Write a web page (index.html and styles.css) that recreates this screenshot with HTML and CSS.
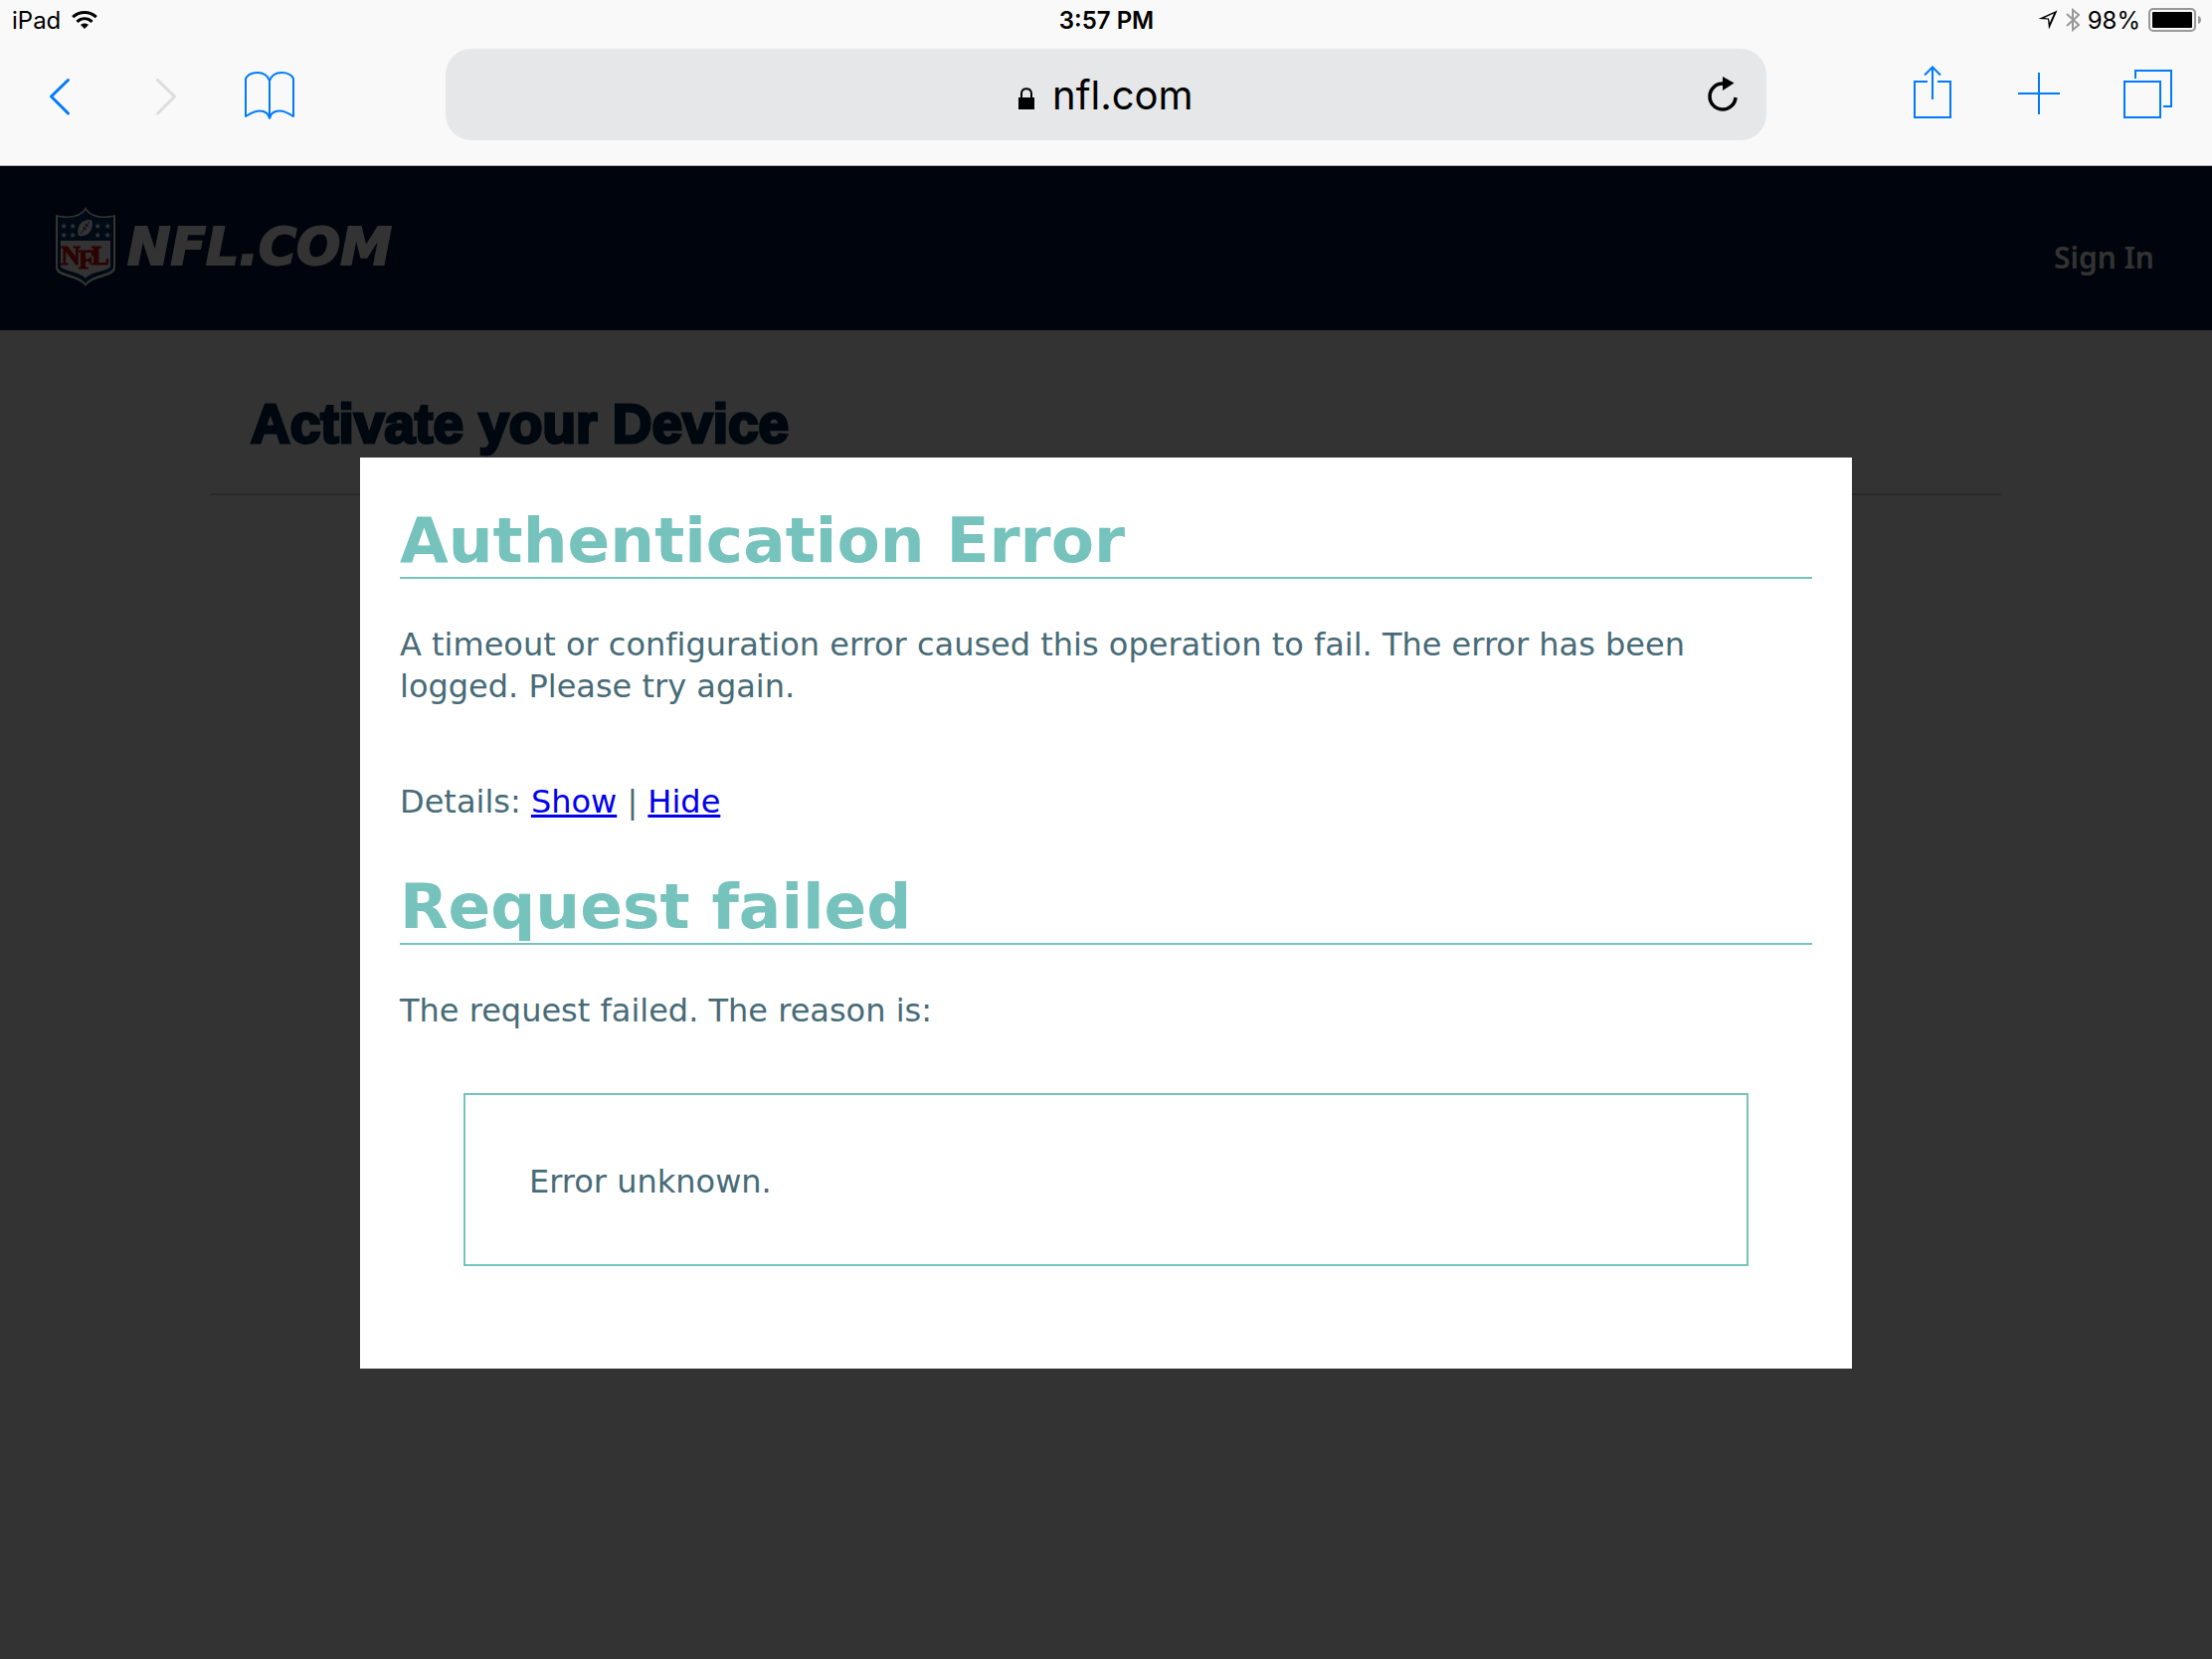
FILE: index.html
```
<!DOCTYPE html>
<html lang="en">
<head>
    <meta charset="UTF-8" />
    <meta name="viewport" content="width=device-width, initial-scale=1.0" />
    <link rel="stylesheet" href="styles.css">
    <title>NFL.com - Activate your Device</title>
</head>
<body>
    <div class="browser">
        <div class="status-bar">
            <div class="status-left">
                <span>iPad</span>
                <svg width="26" height="18" viewBox="0 0 26 18" fill="none" stroke="#000" stroke-width="3">
                    <path d="M1.2 6.2C8 0 18 0 24.8 6.2" />
                    <path d="M5.4 10.8C10 6.8 16 6.8 20.6 10.8" />
                    <path d="M9 14C11.4 12 14.6 12 17 14L13 18Z" fill="#000" stroke="none" />
                </svg>
            </div>
            <div class="time">3:57 PM</div>
            <div class="status-right">
                <svg width="20" height="20" viewBox="0 0 20 20">
                    <path fill="#000" fill-rule="evenodd" d="M19.500 0.500L11 19.500L10 9.500L0.500 9ZM16 3.500L6.500 8L11 8.500L11.800 13Z" />
                </svg>
                <svg width="14" height="24" viewBox="0 0 14 24" fill="none" stroke="#999" stroke-width="2">
                    <path d="M1 6L13 17L7 22V2L13 7L1 18" />
                </svg>
                <span>98%</span>
                <svg width="53" height="24" viewBox="0 0 53 24">
                    <rect x="1" y="1" width="46" height="22" rx="4" fill="none" stroke="#999" stroke-width="2" />
                    <rect x="4" y="4" width="40" height="16" rx="1" fill="#000" />
                    <path d="M50 8C54 9 54 15 50 16Z" fill="#999" />
                </svg>
            </div>
        </div>

        <div class="toolbar">
            <div class="tools">
                <button aria-label="Back">
                    <svg viewBox="0 0 60 60" stroke-width="3" stroke-linecap="round" stroke-linejoin="round"><path d="M38.500 15.500L21.500 32L38.500 49" /></svg>
                </button>
                <button class="off" aria-label="Forward" disabled>
                    <svg viewBox="0 0 60 60" stroke-width="3" stroke-linecap="round" stroke-linejoin="round"><path d="M21.500 15.500L38.500 32L21.500 49" /></svg>
                </button>
                <button aria-label="Bookmarks">
                    <svg viewBox="0 0 60 60" stroke-width="2" stroke-linejoin="round"><path d="M3 52V14C5 10 10 8 15 8C20.500 8 25 11 27 16C29 11 33.500 8 39 8C44 8 49 10 51 14V52C46.500 49 42 46.500 37 46.500C32 46.500 28 49 27 54C26 49 22 46.500 17 46.500C12 46.500 7.500 49 3 52ZM27 16V54" /></svg>
                </button>
            </div>
            <div class="address">
                <label class="address-text">
                    <svg width="16" height="30" viewBox="0 0 16 30">
                        <rect y="18" width="16" height="12" fill="#000" />
                        <path d="M3 19V14C3 7.500 13 7.500 13 14V19" fill="none" stroke="#000" stroke-width="2" />
                    </svg>
                    <input type="text" value="nfl.com" aria-label="Address">
                </label>
                <button class="reload" aria-label="Reload">
                    <svg width="40" height="40" viewBox="0 0 40 40">
                        <path d="M20 9A13 13 0 1 0 33 23" fill="none" stroke="#000" stroke-width="3.500" />
                        <path d="M20 2L31.500 8.500L20 16Z" fill="#000" />
                    </svg>
                </button>
            </div>
            <div class="tools right">
                <button aria-label="Share">
                    <svg viewBox="0 0 60 60" stroke-width="2"><path d="M25 17H12V53H48V17H35M30 35V3M22 10.500L30 2.500L38 10.500" /></svg>
                </button>
                <button aria-label="New tab">
                    <svg viewBox="0 0 60 60" stroke-width="2"><path d="M9 29H51M30 8V50" /></svg>
                </button>
                <button aria-label="Tabs">
                    <svg viewBox="0 0 60 60" stroke-width="2"><path d="M9 17H45V53H9ZM20 14V6H56V42H48" /></svg>
                </button>
            </div>
        </div>
    </div>

    <div class="page">
        <header>
            <a class="logo" href="#">
                <svg width="60" height="80" viewBox="0 0 60 80">
                    <path d="M30 0C33 7 43 12 60 8V62C59 71 36 70 30 80C24 70 1 71 0 62V8C17 12 27 7 30 0Z" fill="#fff" />
                    <path d="M30 3C34 9 44 13 58 10V61C57 68 36 68 30 77C24 68 3 68 2 61V10C16 13 26 9 30 3Z" fill="#013369" />
                    <path d="M5 34H55V60C52 65 35 65 30 72C25 65 8 65 5 60Z" fill="#fff" />
                    <g class="stars">
                        <text x="8" y="22">★</text>
                        <text x="17" y="22">★</text>
                        <text x="42" y="22">★</text>
                        <text x="52" y="22">★</text>
                        <text x="8" y="31">★</text>
                        <text x="17" y="31">★</text>
                        <text x="42" y="31">★</text>
                        <text x="52" y="31">★</text>
                    </g>
                    <path d="M23 29C20 20 26 12 36 13C39 21 34 31 23 29Z" fill="#fff" />
                    <path d="M25 27L34 15M27 20L31 23M29 17L33 20" stroke="#013369" stroke-width="1" />
                    <g class="shield-text">
                        <text x="15" y="58">N</text>
                        <text x="31" y="62">F</text>
                        <text x="45" y="58">L</text>
                    </g>
                </svg>
                <span class="wordmark">NFL.COM</span>
            </a>
            <a class="sign-in" href="#">Sign In</a>
        </header>

        <main>
            <h1>Activate your Device</h1>
        </main>

        <div class="overlay">
            <div class="modal" role="dialog" aria-labelledby="error-title">
                <h2 id="error-title">Authentication Error</h2>
                <p>A timeout or configuration error caused this operation to fail. The error has been logged. Please try again.</p>
                <p class="details">Details: <a href="#reason">Show</a> | <a href="#">Hide</a></p>
                <div id="reason">
                    <h2>Request failed</h2>
                    <p>The request failed. The reason is:</p>
                    <div class="reason-box">Error unknown.</div>
                </div>
            </div>
        </div>
    </div>
</body>
</html>
```

FILE: styles.css
```
* {
    box-sizing: border-box;
}

body {
    margin: 0;
    min-height: 100vh;
    display: flex;
    flex-direction: column;
    font-family: Inter, "Liberation Sans", sans-serif;
    background-color: white;
    color: black;
}

button {
    padding: 0;
    border: none;
    background: none;
    cursor: pointer;
}

svg {
    display: block;
}

/* browser bars */
.browser {
    background-color: #f9f9f9;
    border-bottom: 1px solid #b2b2b2;
}

.status-bar {
    display: grid;
    grid-template-columns: 1fr auto 1fr;
    align-items: center;
    height: 40px;
    padding: 0 11px 0 12px;
    font-size: 24px;
}

.status-left, .status-right {
    display: flex;
    align-items: center;
    gap: 11px;
}

.status-right {
    justify-content: flex-end;
    gap: 8px;
}

.time {
    font-weight: 600;
}

.toolbar {
    display: grid;
    grid-template-columns: 448px 1fr 448px;
    align-items: center;
    padding: 9px 0 25px;
}

.tools {
    display: flex;
    gap: 47px;
    padding: 0 30px;
}

.tools.right {
    justify-content: flex-end;
    padding: 0 37px;
}

.tools svg {
    width: 60px;
    height: 60px;
    fill: none;
    stroke: #007aff;
}

.tools .off svg {
    stroke: #dcdcdc;
}

.address {
    display: grid;
    grid-template-columns: 1fr auto 1fr;
    align-items: center;
    height: 92px;
    padding: 0 24px;
    background-color: #e6e7e9;
    border-radius: 26px;
}

.address-text {
    grid-column: 2;
    display: flex;
    align-items: center;
    gap: 18px;
}

.address input {
    width: 142px;
    padding: 0;
    border: none;
    outline: none;
    background: none;
    font-family: inherit;
    font-size: 40px;
    color: black;
}

.reload {
    justify-self: end;
}

/* site */
.page {
    position: relative;
    flex: 1;
}

header {
    display: flex;
    justify-content: space-between;
    align-items: center;
    height: 165px;
    padding: 0 58px 4px 56px;
    background-color: #00143c;
}

.logo {
    display: flex;
    align-items: center;
    gap: 12px;
    color: white;
    text-decoration: none;
}

.stars {
    font-family: "DejaVu Sans", sans-serif;
    font-size: 8px;
    fill: white;
    text-anchor: middle;
}

.shield-text {
    font-family: "Liberation Serif", serif;
    font-size: 27px;
    font-weight: bold;
    fill: #d50a0a;
    stroke: #d50a0a;
    stroke-width: 1px;
    text-anchor: middle;
}

.wordmark {
    font-family: "DejaVu Sans", sans-serif;
    font-size: 52px;
    font-weight: bold;
    font-style: italic;
    line-height: 60px;
    -webkit-text-stroke: 2px white;
}

.sign-in {
    padding-top: 22px;
    font-family: "Noto Sans", sans-serif;
    font-size: 30px;
    font-weight: 600;
    color: white;
    text-decoration: none;
}

main {
    max-width: 1800px;
    margin: 0 auto;
    padding: 54px 40px 30px;
    border-bottom: 2px solid #ccc;
}

h1 {
    margin: 0;
    font-family: "Liberation Sans Narrow", "Liberation Sans", sans-serif;
    font-size: 55px;
    line-height: 80px;
    color: #00284b;
    -webkit-text-stroke: 3px #00284b;
}

/* error popup */
.overlay {
    position: absolute;
    inset: 0;
    display: flex;
    justify-content: center;
    align-items: center;
    background-color: rgba(0, 0, 0, 0.8);
}

.modal {
    width: 90%;
    max-width: 1500px;
    padding: 48px 40px 103px;
    background-color: white;
    font-family: Verdana, "DejaVu Sans", sans-serif;
    font-size: 32px;
    line-height: 42px;
    font-variant-ligatures: none;
    color: #476b77;
}

.modal h2 {
    margin: 0;
    font-size: 63px;
    line-height: 72px;
    color: #76c2bc;
    border-bottom: 2px solid #76c2bc;
}

.modal p {
    margin: 45px 0 0;
}

.modal .details {
    margin: 74px 0 49px;
}

.modal a {
    color: #0000ee;
}

.reason-box {
    margin: 62px 64px 0;
    padding: 66px 64px 62px;
    border: 2px solid #76c2bc;
}
```
